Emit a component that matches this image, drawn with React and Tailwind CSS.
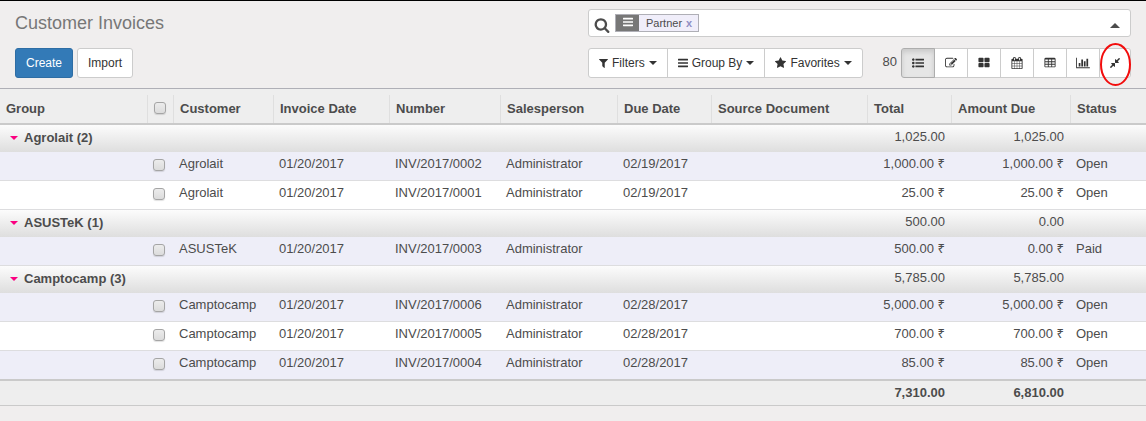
import React from "react";

const ICONS = {
  search: "M1216 832q0-185-131.5-316.5t-316.5-131.5-316.5 131.5-131.5 316.5 131.5 316.5 316.5 131.5 316.5-131.5 131.5-316.5zm512 832q0 52-38 90t-90 38q-54 0-90-38l-343-342q-179 124-399 124-143 0-273.5-55.5t-225-150-150-225-55.5-273.5 55.5-273.5 150-225 225-150 273.5-55.5 273.5 55.5 225 150 150 225 55.5 273.5q0 220-124 399l343 343q37 37 37 90z",
  bars: "M1664 1344v128q0 26-19 45t-45 19h-1408q-26 0-45-19t-19-45v-128q0-26 19-45t45-19h1408q26 0 45 19t19 45zm0-512v128q0 26-19 45t-45 19h-1408q-26 0-45-19t-19-45v-128q0-26 19-45t45-19h1408q26 0 45 19t19 45zm0-512v128q0 26-19 45t-45 19h-1408q-26 0-45-19t-19-45v-128q0-26 19-45t45-19h1408q26 0 45 19t19 45z",
  filter: "M1595 295q17 41-14 70l-493 493v742q0 42-39 59-13 5-25 5-27 0-45-19l-256-256q-19-19-19-45v-486l-493-493q-31-29-14-70 17-39 59-39h1280q42 0 59 39z",
  star: "M1728 647q0 22-26 48l-363 354 86 500q1 7 1 20 0 21-10.5 35.5t-30.5 14.5q-19 0-40-12l-449-236-449 236q-22 12-40 12-21 0-31.5-14.5t-10.5-35.5q0-6 2-20l86-500-364-354q-25-27-25-48 0-37 56-46l502-73 225-455q19-41 49-41t49 41l225 455 502 73q56 9 56 46z",
  list: "M384 1408q0 80-56 136t-136 56-136-56-56-136 56-136 136-56 136 56 56 136zm0-512q0 80-56 136t-136 56-136-56-56-136 56-136 136-56 136 56 56 136zm1408 416v192q0 13-9.5 22.5t-22.5 9.5h-1216q-13 0-22.5-9.5t-9.5-22.5v-192q0-13 9.5-22.5t22.5-9.5h1216q13 0 22.5 9.5t9.5 22.5zm-1408-928q0 80-56 136t-136 56-136-56-56-136 56-136 136-56 136 56 56 136zm1408 416v192q0 13-9.5 22.5t-22.5 9.5h-1216q-13 0-22.5-9.5t-9.5-22.5v-192q0-13 9.5-22.5t22.5-9.5h1216q13 0 22.5 9.5t9.5 22.5zm0-512v192q0 13-9.5 22.5t-22.5 9.5h-1216q-13 0-22.5-9.5t-9.5-22.5v-192q0-13 9.5-22.5t22.5-9.5h1216q13 0 22.5 9.5t9.5 22.5z",
  edit: "M888 1184l116-116-152-152-116 116v56h96v96h56zm440-720q-16-16-33 1l-350 350q-17 17-1 33t33-1l350-350q17-17 1-33zm80 594v190q0 119-84.5 203.5t-203.5 84.5h-832q-119 0-203.5-84.5t-84.5-203.5v-832q0-119 84.5-203.5t203.5-84.5h832q63 0 117 25 15 7 18 23 3 17-9 29l-49 49q-14 14-32 8-23-6-45-6h-832q-66 0-113 47t-47 113v832q0 66 47 113t113 47h832q66 0 113-47t47-113v-126q0-13 9-22l64-64q15-15 35-7t20 29zm-96-738l288 288-672 672h-288v-288zm444 132l-92 92-288-288 92-92q28-28 68-28t68 28l152 152q28 28 28 68t-28 68z",
  kanban: "M832 1024v384q0 52-38 90t-90 38h-512q-52 0-90-38t-38-90v-384q0-52 38-90t90-38h512q52 0 90 38t38 90zm0-768v384q0 52-38 90t-90 38h-512q-52 0-90-38t-38-90v-384q0-52 38-90t90-38h512q52 0 90 38t38 90zm896 768v384q0 52-38 90t-90 38h-512q-52 0-90-38t-38-90v-384q0-52 38-90t90-38h512q52 0 90 38t38 90zm0-768v384q0 52-38 90t-90 38h-512q-52 0-90-38t-38-90v-384q0-52 38-90t90-38h512q52 0 90 38t38 90z",
  calendar: "M192 1664h288v-288h-288v288zm352 0h320v-288h-320v288zm-352-352h288v-320h-288v320zm352 0h320v-320h-320v320zm-352-384h288v-288h-288v288zm736 736h320v-288h-320v288zm-384-736h320v-288h-320v288zm768 736h288v-288h-288v288zm-384-352h320v-320h-320v320zm-352-864v-288q0-13-9.5-22.5t-22.5-9.5h-64q-13 0-22.5 9.5t-9.5 22.5v288q0 13 9.5 22.5t22.5 9.5h64q13 0 22.5-9.5t9.5-22.5zm736 864h288v-320h-288v320zm-384-384h320v-288h-320v288zm384 0h288v-288h-288v288zm32-480v-288q0-13-9.5-22.5t-22.5-9.5h-64q-13 0-22.5 9.5t-9.5 22.5v288q0 13 9.5 22.5t22.5 9.5h64q13 0 22.5-9.5t9.5-22.5zm384-64v1280q0 52-38 90t-90 38h-1408q-52 0-90-38t-38-90v-1280q0-52 38-90t90-38h128v-96q0-66 47-113t113-47h64q66 0 113 47t47 113v96h384v-96q0-66 47-113t113-47h64q66 0 113 47t47 113v96h128q52 0 90 38t38 90z",
  pivot: "M224 128h1344q66 0 113 47t47 113v1088q0 66-47 113t-113 47h-1344q-66 0-113-47t-47-113v-1088q0-66 47-113t113-47zM192 384v256h384v-256zM704 384v256h384v-256zM1216 384v256h384v-256zM192 768v256h384v-256zM704 768v256h384v-256zM1216 768v256h384v-256zM192 1152v256h384v-256zM704 1152v256h384v-256zM1216 1152v256h384v-256z",
  graph: "M640 896v512h-256v-512h256zm384-512v1024h-256v-1024h256zm1024 1152v128h-2048v-1536h128v1408h1920zm-640-896v768h-256v-768h256zm384-384v1152h-256v-1152h256z",
  compress: "M896 960v448q0 26-19 45t-45 19-45-19l-144-144-332 332q-10 10-23 10t-23-10l-114-114q-10-10-10-23t10-23l332-332-144-144q-19-19-19-45t19-45 45-19h448q26 0 45 19t19 45zm755-672q0 13-10 23l-332 332 144 144q19 19 19 45t-19 45-45 19h-448q-26 0-45-19t-19-45v-448q0-26 19-45t45-19 45 19l144 144 332-332q10-10 23-10t23 10l114 114q10 10 10 23z",
};

const VIEW_BOXES = {
  graph: "0 0 2048 1792",
  filter: "192 0 1408 1792",
  bars: "128 0 1536 1792",
  star: "64 0 1664 1792",
};

function Icon({ name, className = "size-3" }) {
  return (
    <svg
      viewBox={VIEW_BOXES[name] ?? "0 0 1792 1792"}
      className={`shrink-0 ${className}`}
      fill="currentColor"
      fillRule={name === "pivot" ? "evenodd" : "nonzero"}
      aria-hidden="true"
    >
      <path d={ICONS[name]} />
    </svg>
  );
}

function Caret({ className = "" }) {
  return (
    <svg viewBox="0 0 8 4" className={`h-1 w-2 shrink-0 ${className}`} fill="currentColor" aria-hidden="true">
      <path d="M0 0h8L4 4z" />
    </svg>
  );
}

const VIEWS = [
  ["list", "List"],
  ["edit", "Editable list"],
  ["kanban", "Kanban"],
  ["calendar", "Calendar"],
  ["pivot", "Pivot"],
  ["graph", "Graph"],
  ["compress", "Collapse groups"],
];

const MENUS = [
  ["filter", "Filters", "h-3 w-[9px]"],
  ["bars", "Group By", "h-3 w-[10px]"],
  ["star", "Favorites", "h-3 w-[11px]"],
];

const COLUMNS = ["Customer", "Invoice Date", "Number", "Salesperson", "Due Date", "Source Document", "Total", "Amount Due", "Status"];

const GROUPS = [
  {
    name: "Agrolait",
    total: "1,025.00",
    due: "1,025.00",
    rows: [
      ["INV/2017/0002", "02/19/2017", "1,000.00", "1,000.00", "Open"],
      ["INV/2017/0001", "02/19/2017", "25.00", "25.00", "Open"],
    ],
  },
  {
    name: "ASUSTeK",
    total: "500.00",
    due: "0.00",
    rows: [["INV/2017/0003", "", "500.00", "0.00", "Paid"]],
  },
  {
    name: "Camptocamp",
    total: "5,785.00",
    due: "5,785.00",
    rows: [
      ["INV/2017/0006", "02/28/2017", "5,000.00", "5,000.00", "Open"],
      ["INV/2017/0005", "02/28/2017", "700.00", "700.00", "Open"],
      ["INV/2017/0004", "02/28/2017", "85.00", "85.00", "Open"],
    ],
  },
];

function Checkbox({ label }) {
  return (
    <input
      type="checkbox"
      aria-label={label}
      className="block size-3 appearance-none rounded-[3px] border border-[#a5a5a5] bg-linear-to-b from-[#ececec] to-[#dcdcdc] shadow-[0_1px_1px_rgba(0,0,0,0.12)] checked:from-[#337ab7] checked:to-[#337ab7]"
    />
  );
}

function Money({ amount }) {
  return (
    <>
      {amount} <span className="font-['Noto_Sans',sans-serif] leading-none">₹</span>
    </>
  );
}

function ControlPanel() {
  return (
    <header className="grid grid-cols-2 gap-x-[30px] gap-y-[11px] border-t border-b border-t-black border-b-[#afafb6] px-[15px] pt-2 pb-[10px]">
      <h1 className="text-lg leading-7 text-[#777]">Customer Invoices</h1>
      <div className="flex h-7 items-center rounded-[3px] border border-[#ccc] bg-white pr-2 pl-[5px]">
        <Icon name="search" className="mt-1 size-4 text-[#4c4c4c]" />
        <div className="ml-[5px] flex h-[18px] items-stretch border border-[#afafb6] bg-[#f0eefa] text-[11px] leading-4">
          <span className="flex w-[23px] items-center justify-center bg-[#777] pb-0.5 text-white">
            <Icon name="bars" className="h-3 w-[10px]" />
          </span>
          <span className="pl-[7px] text-[#4c4c4c]">Partner</span>
          <button type="button" aria-label="Remove Partner" className="pr-[6px] pl-1 font-bold text-[#8f8fc4]">
            x
          </button>
        </div>
        <input type="text" aria-label="Search" className="h-full min-w-0 flex-1 px-2 outline-none" />
        <button type="button" aria-label="Hide search options" className="px-0.5 pt-1 text-[#4c4c4c]">
          <svg viewBox="0 0 10 5" className="h-[5px] w-[10px]" fill="currentColor" aria-hidden="true">
            <path d="M0 5h10L5 0z" />
          </svg>
        </button>
      </div>
      <div className="flex gap-1 text-xs">
        <button type="button" className="h-[30px] rounded-[3px] border border-[#2e6da4] bg-[#337ab7] px-[10px] text-white">
          Create
        </button>
        <button type="button" className="h-[30px] rounded-[3px] border border-[#ccc] bg-white px-[10px] text-[#333]">
          Import
        </button>
      </div>
      <div className="flex items-start justify-between text-xs text-[#333]">
        <div className="flex divide-x divide-[#ccc] rounded-[3px] border border-[#ccc] bg-white">
          {MENUS.map(([icon, label, size]) => (
            <button key={label} type="button" className="flex h-7 items-center gap-1 px-[10px]">
              <Icon name={icon} className={size} />
              {label}
              <Caret />
            </button>
          ))}
        </div>
        <div className="flex">
          <span className="mr-1 text-[13px] leading-7 text-[#4c4c4c]">80</span>
          <div className="flex">
            {VIEWS.map(([icon, label], i) => (
              <button
                key={label}
                type="button"
                aria-label={label}
                aria-pressed={i === 0}
                className="relative -ml-px flex h-[30px] w-[34px] items-center justify-center border border-[#ccc] bg-white first:z-10 first:ml-0 first:rounded-l-[3px] first:border-[#adadad] first:bg-[#e6e6e6] first:shadow-[inset_0_3px_5px_rgba(0,0,0,0.125)] last:w-8 last:rounded-r-[3px]"
              >
                <Icon name={icon} className={icon === "graph" ? "h-3 w-[14px]" : "size-3"} />
                {icon === "compress" && (
                  <svg viewBox="0 0 32 44" className="absolute -top-[6px] left-0 h-11 w-8 overflow-visible" fill="none" stroke="#f20d0d" strokeWidth="2" aria-hidden="true">
                    <ellipse cx="15.5" cy="21.5" rx="14.5" ry="20.5" />
                  </svg>
                )}
              </button>
            ))}
          </div>
        </div>
      </div>
    </header>
  );
}

function InvoiceTable() {
  return (
    <table className="w-full table-fixed border-separate border-spacing-0 text-left text-[13px] leading-[18px]">
      <colgroup>
        <col className="w-[147px]" />
        <col className="w-[26px]" />
        <col className="w-[100px]" />
        <col className="w-[116px]" />
        <col className="w-[111px]" />
        <col className="w-[117px]" />
        <col className="w-[94px]" />
        <col />
        <col className="w-[84px]" />
        <col className="w-[119px]" />
        <col className="w-[76px]" />
      </colgroup>
      <thead className="bg-[#eee]">
        <tr className="h-9">
          <th scope="col" className="border-b-2 border-[#cacaca] p-0 pt-[6px]">
            <div className="flex h-7 items-center pl-[6px]">Group</div>
          </th>
          <th scope="col" className="border-b-2 border-[#cacaca] p-0 pt-[6px]">
            <div className="flex h-7 items-center border-l border-[#dfdfdf] pb-0.5 pl-[6px]">
              <Checkbox label="Select all invoices" />
            </div>
          </th>
          {COLUMNS.map((label) => (
            <th key={label} scope="col" className="border-b-2 border-[#cacaca] p-0 pt-[6px]">
              <div className="flex h-7 items-center border-l border-[#dfdfdf] pl-[6px] whitespace-nowrap">{label}</div>
            </th>
          ))}
        </tr>
      </thead>
      {GROUPS.map((group) => (
        <tbody key={group.name} className="group">
          <tr className="h-[27px] bg-linear-to-b from-[#fcfcfc] to-[#dedede]">
            <th scope="rowgroup" colSpan={2} className="p-0 pb-0.5">
              <button type="button" aria-expanded="true" className="flex items-center pl-[10px] font-bold">
                <Caret className="mr-[6px] text-[#fb0080]" />
                {group.name} ({group.rows.length})
              </button>
            </th>
            <td colSpan={6} />
            <td className="pr-[6px] pb-[3px] text-right">{group.total}</td>
            <td className="pr-[6px] pb-[3px] text-right">{group.due}</td>
            <td />
          </tr>
          {group.rows.map(([number, dueDate, total, due, status]) => (
            <tr
              key={number}
              className="h-[29px] odd:bg-white even:bg-[#eeeef8] [&>td]:border-b [&>td]:border-[#dddddf] [&>td]:pt-[3px] [&>td]:pb-[7px] [&>td]:pl-[6px] [&>td]:align-top group-last-of-type:last:[&>td]:border-[#cacaca]"
            >
              <td />
              <td>
                <div className="pt-1">
                  <Checkbox label={`Select ${number}`} />
                </div>
              </td>
              <td>{group.name}</td>
              <td>01/20/2017</td>
              <td>{number}</td>
              <td>Administrator</td>
              <td>{dueDate}</td>
              <td />
              <td className="pr-[6px] text-right">
                <Money amount={total} />
              </td>
              <td className="pr-[6px] text-right">
                <Money amount={due} />
              </td>
              <td>{status}</td>
            </tr>
          ))}
        </tbody>
      ))}
      <tfoot className="bg-[#eee] font-bold">
        <tr className="h-[26px] [&>td]:border-t [&>td]:border-b [&>td]:border-[#cacaca]">
          <td colSpan={8} />
          <td className="pr-[6px] text-right">7,310.00</td>
          <td className="pr-[6px] text-right">6,810.00</td>
          <td />
        </tr>
      </tfoot>
    </table>
  );
}

export default function App() {
  return (
    <main className="min-h-screen bg-[#f0eeee] font-['Liberation_Sans',Arial,sans-serif] text-[#4c4c4c]">
      <ControlPanel />
      <InvoiceTable />
    </main>
  );
}
